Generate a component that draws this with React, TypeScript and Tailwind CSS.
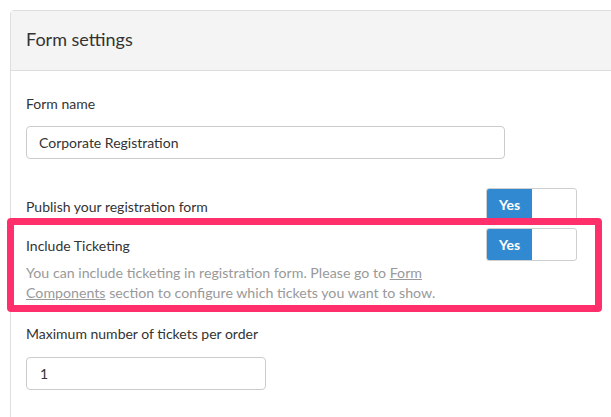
function Toggle() {
  return (
    <div className="flex h-[33px] w-[91px] overflow-hidden rounded-[3px] border border-[#cfcfcf] bg-white">
      <div className="flex w-[45px] items-center justify-center bg-[#3189d1] text-[14px] font-bold text-white">
        Yes
      </div>
      <div className="flex-1" />
    </div>
  )
}

export default function App() {
  return (
    <div className="relative h-[417px] w-[611px] overflow-hidden bg-white font-['Lato',sans-serif] text-[#333]">
      <div className="ml-[10px] mt-[10px] h-[420px] w-[640px] rounded-tl-[4px] border border-[#dedede] bg-white">
        <div className="flex h-[60px] items-center border-b border-[#dedede] bg-[#f4f4f4] px-[15px] pb-[2px] text-[18px]">
          Form settings
        </div>

        <div className="px-[15px]">
          <div className="mt-[23px] text-[14px] leading-[20px]">Form name</div>
          <div className="mt-[12px] flex h-[33px] w-[479px] items-center rounded-[4px] border border-[#cccccc] px-[12px] text-[14px]">
            Corporate Registration
          </div>

          <div className="mt-[29px] flex w-[551px] items-start justify-between">
            <div className="pt-[9px] text-[14px] leading-[20px]">Publish your registration form</div>
            <Toggle />
          </div>

          <div className="mt-[7px] flex w-[551px] items-start justify-between">
            <div>
              <div className="pt-[8px] text-[14px] leading-[20px]">Include Ticketing</div>
              <div className="mt-[7px] w-[425px] text-[14.2px] leading-[20px] text-[#999999]">
                You can include ticketing in registration form. Please go to{' '}
                <span className="underline">Form Components</span> section to configure which tickets you want to show.
              </div>
            </div>
            <Toggle />
          </div>

          <div className="mt-[21px] text-[14px] leading-[20px]">Maximum number of tickets per order</div>
          <div className="mt-[13px] flex h-[33px] w-[240px] items-center rounded-[4px] border border-[#cccccc] px-[13px] text-[14px]">
            1
          </div>
        </div>
      </div>

      {/* highlight annotation */}
      <div className="absolute left-[7px] top-[218px] h-[94px] w-[595px] rounded-[4px] border-[7px] border-[#ff2f6b]" />
    </div>
  )
}
